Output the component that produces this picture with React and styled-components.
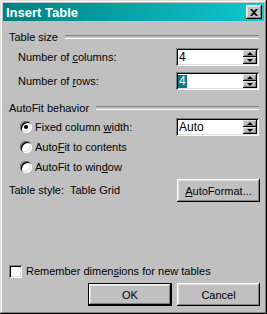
import React from "react"
import styled, { createGlobalStyle } from "styled-components"

const GlobalStyle = createGlobalStyle`
  html, body {
    margin: 0;
    padding: 0;
    background: #c0c0c0;
  }
  * { box-sizing: border-box; }
`

const raised = `
  box-shadow: inset -1px -1px #000, inset 1px 1px #fff,
    inset -2px -2px #808080, inset 2px 2px #dfdfdf;
`

const sunken = `
  box-shadow: inset 1px 1px #808080, inset -1px -1px #fff,
    inset 2px 2px #000, inset -2px -2px #dfdfdf;
`

const Window = styled.div`
  width: 267px;
  height: 314px;
  background: #c0c0c0;
  padding: 3px;
  display: flex;
  flex-direction: column;
  font-family: "Liberation Sans", Arial, sans-serif;
  font-size: 11px;
  color: #000;
  box-shadow: inset -1px -1px #000, inset 1px 1px #dfdfdf,
    inset -2px -2px #808080, inset 2px 2px #fff;
`

const TitleBar = styled.div`
  height: 18px;
  display: flex;
  align-items: center;
  justify-content: space-between;
  padding: 0 2px 0 3px;
  background: linear-gradient(to right, #008080, #10c8d0);
  color: #fff;
  font-weight: bold;
  font-size: 13px;
`

const CloseButton = styled.div`
  width: 16px;
  height: 14px;
  background: #c0c0c0;
  display: flex;
  align-items: center;
  justify-content: center;
  ${raised};
`

const Body = styled.div`
  flex: 1;
  display: flex;
  flex-direction: column;
  padding: 0 4px 5px 6px;
`

const GroupHeader = styled.div`
  height: 13px;
  margin-top: ${p => p.$mt}px;
  display: flex;
  align-items: center;
  gap: 7px;
  &::after {
    content: "";
    flex: 1;
    height: 2px;
    margin-right: 1px;
    border-top: 1px solid #808080;
    border-bottom: 1px solid #fff;
  }
`

const Row = styled.div`
  height: ${p => p.$h}px;
  margin-top: ${p => p.$mt || 0}px;
  padding-left: ${p => p.$indent || 0}px;
  display: flex;
  align-items: center;
  justify-content: space-between;
`

const Label = styled.span`
  white-space: nowrap;
  line-height: 13px;
`

const SpinBox = styled.div`
  width: 83px;
  height: 18px;
  margin-right: 1px;
  background: #fff;
  padding: 2px;
  display: flex;
  ${sunken};
`

const SpinText = styled.div`
  flex: 1;
  display: flex;
  align-items: center;
  padding-left: 1px;
  font-size: 12px;
`

const Selected = styled.span`
  background: #008080;
  color: #fff;
  line-height: 13px;
  padding: 0 1px;
  margin-left: -1px;
`

const SpinButtons = styled.div`
  width: 14px;
  display: flex;
  flex-direction: column;
`

const SpinButton = styled.div`
  flex: 1;
  background: #c0c0c0;
  display: flex;
  align-items: center;
  justify-content: center;
  box-shadow: inset -1px -1px #000, inset 1px 1px #dfdfdf,
    inset -2px -2px #808080;
`

const Arrow = styled.div`
  width: 0;
  height: 0;
  margin-top: -1px;
  border-left: 3px solid transparent;
  border-right: 3px solid transparent;
  ${p => (p.$up ? "border-bottom: 3px solid #000;" : "border-top: 3px solid #000;")}
`

const RadioLabel = styled.label`
  display: flex;
  align-items: center;
  gap: 3px;
`

const RadioCircle = styled.span`
  width: 12px;
  height: 12px;
  border-radius: 50%;
  background: #fff;
  display: flex;
  align-items: center;
  justify-content: center;
  box-shadow: inset 1px 1px #808080, inset -1px -1px #fff,
    inset 2px 2px #000, inset -2px -2px #dfdfdf;
  &::after {
    content: "";
    width: 4px;
    height: 4px;
    border-radius: 50%;
    background: ${p => (p.$checked ? "#000" : "transparent")};
  }
`

const Button = styled.div`
  width: ${p => p.$w || 83}px;
  height: 23px;
  display: flex;
  align-items: center;
  justify-content: center;
  background: #c0c0c0;
  ${raised};
  ${p =>
    p.$default &&
    `box-shadow: inset 0 0 0 1px #000, inset -2px -2px #000, inset 2px 2px #fff,
      inset -3px -3px #808080, inset 3px 3px #dfdfdf;`}
`

const Spacer = styled.div`
  flex: 1;
`

const CheckRow = styled.label`
  display: flex;
  align-items: center;
  gap: 4px;
  height: 13px;
`

const CheckBox = styled.span`
  width: 13px;
  height: 13px;
  background: #fff;
  ${sunken};
`

const ButtonRow = styled.div`
  display: flex;
  justify-content: flex-end;
  gap: 5px;
  margin-top: 5px;
`

const Spinner = ({ children }) => (
  <SpinBox>
    <SpinText>{children}</SpinText>
    <SpinButtons>
      <SpinButton>
        <Arrow $up />
      </SpinButton>
      <SpinButton>
        <Arrow />
      </SpinButton>
    </SpinButtons>
  </SpinBox>
)

const App = () => (
  <>
    <GlobalStyle />
    <Window>
      <TitleBar>
        <span>Insert Table</span>
        <CloseButton>
          <svg width="8" height="7" viewBox="0 0 8 7">
            <path d="M0 0h2l2 2 2-2h2L5 3.5 8 7H6L4 5 2 7H0l3-3.5z" fill="#000" />
          </svg>
        </CloseButton>
      </TitleBar>
      <Body>
        <GroupHeader $mt={9}>Table size</GroupHeader>
        <Row $h={18} $mt={5} $indent={9}>
          <Label>
            Number of <u>c</u>olumns:
          </Label>
          <Spinner>4</Spinner>
        </Row>
        <Row $h={18} $mt={6} $indent={9}>
          <Label>
            Number of <u>r</u>ows:
          </Label>
          <Spinner>
            <Selected>4</Selected>
          </Spinner>
        </Row>
        <GroupHeader $mt={11}>AutoFit behavior</GroupHeader>
        <Row $h={20} $mt={3} $indent={11}>
          <RadioLabel>
            <RadioCircle $checked />
            <Label>
              Fixed column <u>w</u>idth:
            </Label>
          </RadioLabel>
          <Spinner>Auto</Spinner>
        </Row>
        <Row $h={20} $indent={11}>
          <RadioLabel>
            <RadioCircle />
            <Label>
              Auto<u>F</u>it to contents
            </Label>
          </RadioLabel>
        </Row>
        <Row $h={20} $indent={11}>
          <RadioLabel>
            <RadioCircle />
            <Label>
              AutoFit to win<u>d</u>ow
            </Label>
          </RadioLabel>
        </Row>
        <Row $h={23} $mt={2}>
          <Label>Table style:&nbsp; Table Grid</Label>
          <Button>
            <u>A</u>utoFormat...
          </Button>
        </Row>
        <Spacer />
        <CheckRow>
          <CheckBox />
          <Label>
            Remember dimen<u>s</u>ions for new tables
          </Label>
        </CheckRow>
        <ButtonRow>
          <Button $default $w={84}>OK</Button>
          <Button>Cancel</Button>
        </ButtonRow>
      </Body>
    </Window>
  </>
)

export default App
